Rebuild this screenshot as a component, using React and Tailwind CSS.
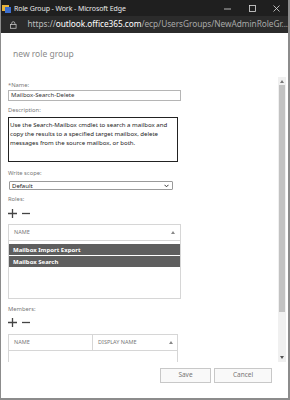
import React from "react";

const F = { fontFamily: '"Noto Sans", "Open Sans", sans-serif' };

function PlusMinus() {
  return (
    <div className="flex items-center gap-[5px] h-[10px] mt-[5px] shrink-0">
      <svg width="9" height="9" viewBox="0 0 9 9"><path d="M4.5 0v9M0 4.5h9" stroke="#444" strokeWidth="1.3" /></svg>
      <svg width="8" height="9" viewBox="0 0 8 9"><path d="M0 4.5h8" stroke="#444" strokeWidth="1.3" /></svg>
    </div>
  );
}

export default function App() {
  return (
    <div className="w-[290px] h-[400px] bg-white flex flex-col overflow-hidden border-l border-r-2 border-b-2 border-[#8c8c8c]" style={F}>
      {/* title bar */}
      <div className="h-[16px] bg-[#1f1f1f] flex items-center text-white shrink-0">
        <svg className="ml-[1px] mr-[3px]" width="9" height="9" viewBox="0 0 9 9">
          <rect x="0" y="1" width="7" height="6" fill="#e8b33a" />
          <rect x="3" y="3" width="6" height="6" fill="#3d6fcf" />
        </svg>
        <span className="text-[7px] leading-none text-[#e8e8e8] tracking-[-0.1px]">Role Group - Work - Microsoft Edge</span>
        <div className="ml-auto flex items-center h-full">
          <svg className="mr-[18px]" width="7" height="7" viewBox="0 0 7 7"><path d="M0 4h7" stroke="#ddd" strokeWidth="0.8" /></svg>
          <svg className="mr-[17px]" width="7" height="7" viewBox="0 0 7 7"><rect x="0.5" y="0.5" width="6" height="6" fill="none" stroke="#ddd" strokeWidth="0.8" /></svg>
          <svg className="mr-[8px]" width="7" height="7" viewBox="0 0 7 7"><path d="M0.5 0.5l6 6M6.5 0.5l-6 6" stroke="#ddd" strokeWidth="0.8" /></svg>
        </div>
      </div>
      {/* address bar */}
      <div className="h-[17px] bg-[#2b2b2b] flex items-center shrink-0">
        <svg className="ml-[9px] mr-[11px]" width="7" height="8" viewBox="0 0 7 8">
          <rect x="0.5" y="3.5" width="6" height="4" fill="none" stroke="#ccc" strokeWidth="0.8" />
          <path d="M1.8 3.5V2.2a1.7 1.7 0 0 1 3.4 0v1.3" fill="none" stroke="#ccc" strokeWidth="0.8" />
        </svg>
        <span className="text-[8.3px] leading-none whitespace-nowrap tracking-[-0.05px]">
          <span className="text-[#bdbdbd]">https://</span>
          <span className="text-white">outlook.office365.com</span>
          <span className="text-[#a8a8a8]">/ecp/UsersGroups/NewAdminRoleGr...</span>
        </span>
      </div>
      {/* header */}
      <div className="h-[42px] shrink-0 flex items-center pl-[12px]">
        <span className="text-[8.5px] text-[#8a8a8a] leading-none mt-[1px]">new role group</span>
      </div>
      {/* scroll area */}
      <div className="h-[287px] shrink-0 flex">
        <div className="flex-1 pl-[7px] flex flex-col overflow-hidden">
          <div className="text-[5.8px] text-[#777] leading-none mt-[8px] shrink-0">*Name:</div>
          <div className="w-[173px] h-[11px] mt-[1px] border border-[#b5b5b5] flex items-center pl-[2px] shrink-0">
            <span className="text-[6px] text-[#333] leading-none">Mailbox-Search-Delete</span>
          </div>
          <div className="text-[5.8px] text-[#777] leading-none mt-[7px] shrink-0">Description:</div>
          <div className="w-[170px] h-[45px] mt-[3px] border-[1.5px] border-[#222] pl-[1px] pt-[2px] shrink-0">
            <p className="text-[6.1px] text-[#222] leading-[9px] tracking-[-0.02px]">
              Use the Search-Mailbox cmdlet to search a mailbox and copy the results to a specified target mailbox, delete messages from the source mailbox, or both.
            </p>
          </div>
          <div className="text-[5.8px] text-[#777] leading-none mt-[9px] shrink-0">Write scope:</div>
          <div className="w-[164px] h-[9px] mt-[5px] ml-[1px] border border-[#9a9a9a] rounded-[1px] flex items-center pl-[2px] pr-[3px] shrink-0">
            <span className="text-[6px] text-[#222] leading-none">Default</span>
            <svg className="ml-auto" width="5" height="4" viewBox="0 0 5 4"><path d="M0.5 0.8l2 2 2-2" fill="none" stroke="#333" strokeWidth="1" /></svg>
          </div>
          <div className="text-[5.8px] text-[#777] leading-none mt-[7px] shrink-0">Roles:</div>
          <PlusMinus />
          <div className="w-[173px] h-[75px] mt-[6px] border border-[#d6d6d6] flex flex-col shrink-0">
            <div className="h-[16px] border-b border-[#d6d6d6] flex items-center pl-[5px] pr-[5px] shrink-0">
              <span className="text-[5.5px] text-[#777] leading-none">NAME</span>
              <svg className="ml-auto" width="4" height="3" viewBox="0 0 4 3"><path d="M0 3L2 0l2 3z" fill="#888" /></svg>
            </div>
            <div className="h-[11px] mt-[3px] bg-[#5e5e5e] flex items-center pl-[4px] shrink-0">
              <span className="text-[6px] font-bold text-white leading-none">Mailbox Import Export</span>
            </div>
            <div className="h-[11px] mt-[1px] bg-[#5e5e5e] flex items-center pl-[4px] shrink-0">
              <span className="text-[6px] font-bold text-white leading-none">Mailbox Search</span>
            </div>
          </div>
          <div className="text-[5.8px] text-[#777] leading-none mt-[8px] shrink-0">Members:</div>
          <PlusMinus />
          <div className="w-[170px] h-[40px] mt-[6px] border border-[#d6d6d6] border-b-0 flex flex-col shrink-0">
            <div className="h-[16px] border-b border-[#d6d6d6] flex shrink-0">
              <div className="w-[84px] border-r border-[#d6d6d6] flex items-center pl-[5px]">
                <span className="text-[5.5px] text-[#777] leading-none">NAME</span>
              </div>
              <div className="flex-1 flex items-center pl-[5px] pr-[4px]">
                <span className="text-[5.5px] text-[#777] leading-none">DISPLAY NAME</span>
                <svg className="ml-auto" width="4" height="3" viewBox="0 0 4 3"><path d="M0 3L2 0l2 3z" fill="#888" /></svg>
              </div>
            </div>
          </div>
        </div>
        {/* scrollbar */}
        <div className="w-[8px] mr-[2px] mt-[2px] bg-[#f0f0f0] flex flex-col items-center">
          <div className="h-[8px] flex items-center justify-center">
            <svg width="4" height="3" viewBox="0 0 4 3"><path d="M0 3L2 0l2 3z" fill="#777" /></svg>
          </div>
          <div className="w-[6px] h-[227px] bg-[#c2c2c2]" />
          <div className="flex-1" />
          <div className="h-[10px] flex items-center justify-center">
            <svg width="4" height="3" viewBox="0 0 4 3"><path d="M0 0h4L2 3z" fill="#555" /></svg>
          </div>
        </div>
      </div>
      {/* footer */}
      <div className="flex-1 flex justify-end items-start pt-[6px] pr-[16px] gap-[3px]">
        <div className="w-[51px] h-[15px] border border-[#c8c8c8] bg-[#f9f9f9] flex items-center justify-center">
          <span className="text-[6.5px] text-[#777] leading-none">Save</span>
        </div>
        <div className="w-[58px] h-[15px] border border-[#c8c8c8] bg-[#f9f9f9] flex items-center justify-center">
          <span className="text-[6.5px] text-[#777] leading-none">Cancel</span>
        </div>
      </div>
    </div>
  );
}
